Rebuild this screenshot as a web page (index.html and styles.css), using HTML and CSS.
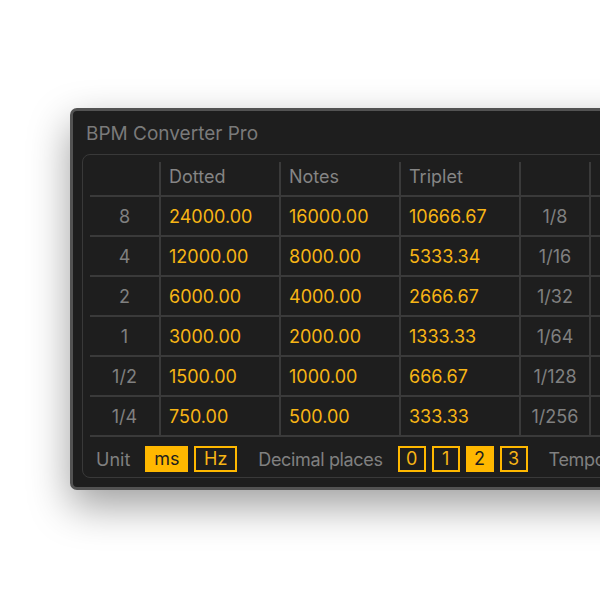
FILE: index.html
```html
<!DOCTYPE html>
<html lang="en">
<head>
  <meta charset="UTF-8">
  <title>BPM Converter Pro</title>
  <link rel="stylesheet" href="styles.css">
</head>
<body>
<div class="stage">
  <div class="device">
    <div class="device-title">BPM Converter Pro</div>

    <div class="panel">
      <table class="grid">
        <colgroup>
          <col class="c-bars">
          <col class="c-val"><col class="c-val"><col class="c-val">
          <col class="c-div">
          <col class="c-val">
        </colgroup>
        <tr class="head">
          <td></td><td>Dotted</td><td>Notes</td><td>Triplet</td><td></td><td></td>
        </tr>
        <tr><td class="lbl">8</td><td>24000.00</td><td>16000.00</td><td>10666.67</td><td class="lbl">1/8</td><td></td></tr>
        <tr><td class="lbl">4</td><td>12000.00</td><td>8000.00</td><td>5333.34</td><td class="lbl">1/16</td><td></td></tr>
        <tr><td class="lbl">2</td><td>6000.00</td><td>4000.00</td><td>2666.67</td><td class="lbl">1/32</td><td></td></tr>
        <tr><td class="lbl">1</td><td>3000.00</td><td>2000.00</td><td>1333.33</td><td class="lbl">1/64</td><td></td></tr>
        <tr><td class="lbl">1/2</td><td>1500.00</td><td>1000.00</td><td>666.67</td><td class="lbl">1/128</td><td></td></tr>
        <tr><td class="lbl">1/4</td><td>750.00</td><td>500.00</td><td>333.33</td><td class="lbl">1/256</td><td></td></tr>
      </table>

      <div class="controls">
        <span class="ctl-label">Unit</span>
        <div class="btns">
          <button class="tog on unit">ms</button>
          <button class="tog unit">Hz</button>
        </div>
        <span class="ctl-label wide">Decimal places</span>
        <div class="btns">
          <button class="tog dp">0</button>
          <button class="tog dp">1</button>
          <button class="tog on dp">2</button>
          <button class="tog dp">3</button>
        </div>
        <span class="ctl-label wide">Tempo</span>
      </div>
    </div>
  </div>
</div>
</body>
</html>
```

FILE: styles.css
```css
body {
  margin: 0;
  background: #fff;
  font-family: 'Inter', 'Liberation Sans', sans-serif;
}
.stage {
  height: 600px;
  padding: 108px 0 0 70px;
  box-sizing: border-box;
  overflow: hidden;
}
.device {
  width: max-content;
  padding: 12px 9px 9px;
  background: #1e1e1e;
  border: 3px solid #535353;
  border-radius: 7px;
  box-shadow: 0 16px 40px rgba(0, 0, 0, 0.38);
}
.device-title {
  padding-left: 4px;
  margin-bottom: 9px;
  font-size: 19px;
  line-height: 22px;
  color: #7a7a7a;
}
.panel {
  border: 1px solid #393939;
  border-radius: 8px;
  padding: 7px 7px 0;
}
.grid {
  border-collapse: separate;
  border-spacing: 0;
  table-layout: fixed;
  width: 619px;
  font-size: 18px;
}
.c-bars { width: 69px; }
.c-val { width: 120px; }
.c-div { width: 70px; }
.grid td {
  box-sizing: border-box;
  height: 40px;
  padding: 0 0 0 8px;
  border-bottom: 2px solid #3a3a3a;
  color: #f7b515;
  white-space: nowrap;
  vertical-align: middle;
}
.grid td + td {
  border-left: 2px solid #3a3a3a;
}
.grid .head td {
  height: 35px;
  padding-bottom: 5px;
  color: #858585;
}
.grid td.lbl {
  padding: 0;
  text-align: center;
  color: #808080;
}
.controls {
  display: flex;
  align-items: center;
  padding: 9px 0 5px 6px;
  white-space: nowrap;
}
.ctl-label {
  font-size: 18px;
  color: #808080;
  margin-right: 15px;
}
.ctl-label.wide {
  margin-left: 21px;
  margin-right: 15px;
  letter-spacing: -0.35px;
}
.btns {
  display: flex;
  gap: 6px;
}
.tog {
  box-sizing: border-box;
  height: 26px;
  padding: 0;
  background: transparent;
  border: 2px solid #ffb800;
  color: #f7b515;
  font-family: inherit;
  font-size: 18px;
  line-height: 22px;
}
.tog.unit { width: 43px; }
.tog.dp { width: 28px; }
.tog.on {
  background: #ffb800;
  color: #1e1e1e;
}
```
